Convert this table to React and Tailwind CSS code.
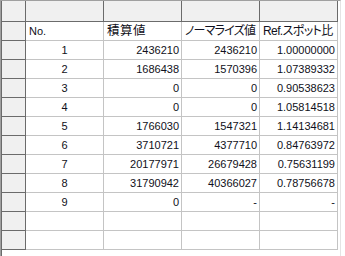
const ROWS = [
  ['1', '2436210', '2436210', '1.00000000'],
  ['2', '1686438', '1570396', '1.07389332'],
  ['3', '0', '0', '0.90538623'],
  ['4', '0', '0', '1.05814518'],
  ['5', '1766030', '1547321', '1.14134681'],
  ['6', '3710721', '4377710', '0.84763972'],
  ['7', '20177971', '26679428', '0.75631199'],
  ['8', '31790942', '40366027', '0.78756678'],
  ['9', '0', '-', '-'],
  ['', '', '', ''],
  ['', '', '', ''],
]

const FONT = { fontFamily: '"Liberation Sans", "Noto Sans CJK JP", sans-serif' }

function HeadCell() {
  return <div className="w-[78px] h-full bg-[#f0f0f0] border-r border-b border-[#6b6b6b]" />
}

function RowHead() {
  return <div className="w-[24px] h-full shrink-0 bg-[#f0f0f0] border-r border-b border-[#6b6b6b]" />
}

function Cell({ children, left }) {
  return (
    <div
      className={
        'w-[78px] h-full flex items-center overflow-hidden border-r border-b border-[#c4c4c4] whitespace-nowrap ' +
        (left ? 'justify-start pl-[3px]' : 'justify-end pr-[2px]')
      }
    >
      {children}
    </div>
  )
}

export default function App() {
  return (
    <div className="w-[345px] h-[256px] bg-white overflow-hidden text-[11px] text-[#101020]" style={FONT}>
      <div className="w-[341px] h-[256px] border-l border-t border-r border-l-[#a0a0a0] border-t-[#a0a0a0] border-r-[#e4e4e4]">
        <div className="h-full border-l border-[#6b6b6b]">
          {/* column header row */}
          <div className="flex h-[21px]">
            <RowHead />
            <HeadCell />
            <HeadCell />
            <HeadCell />
            <HeadCell />
          </div>
          {/* title row */}
          <div className="flex h-[19px]">
            <RowHead />
            <Cell left>No.</Cell>
            <Cell left>
              <span className="text-[12.5px] tracking-[0.5px]">積算値</span>
            </Cell>
            <Cell left>
              <span className="text-[12px] tracking-[-0.8px] [font-feature-settings:'palt']">ノーマライズ値</span>
            </Cell>
            <Cell left>
              <span className="text-[12px] tracking-[-0.6px] [font-feature-settings:'palt']">Ref.スポット比</span>
            </Cell>
          </div>
          {ROWS.map((r, i) => (
            <div key={i} className="flex h-[19px]">
              <RowHead />
              <div className="w-[78px] h-full flex items-center justify-center border-r border-b border-[#c4c4c4]">
                {r[0]}
              </div>
              <Cell>{r[1]}</Cell>
              <Cell>{r[2]}</Cell>
              <Cell>{r[3]}</Cell>
            </div>
          ))}
        </div>
      </div>
    </div>
  )
}
